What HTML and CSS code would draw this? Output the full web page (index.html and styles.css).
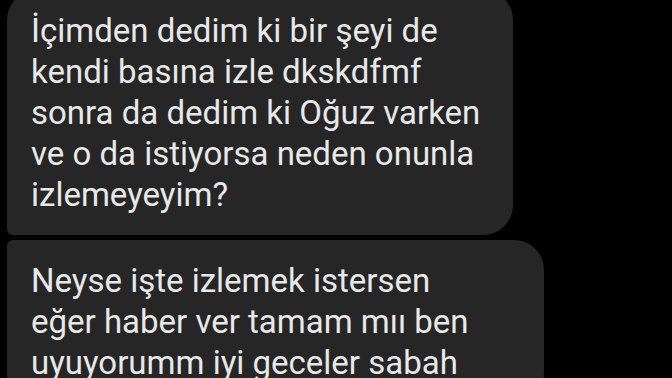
FILE: index.html
```html
<!DOCTYPE html>
<html lang="tr">
<head>
<meta charset="utf-8">
<link rel="stylesheet" href="styles.css">
</head>
<body>
<div class="thread">
  <div class="bubble bubble-first">
    <p class="msg">İçimden dedim ki bir şeyi de<br>kendi basına izle dkskdfmf<br>sonra da dedim ki Oğuz varken<br>ve o da istiyorsa neden onunla<br>izlemeyeyim?</p>
  </div>
  <div class="bubble bubble-second">
    <p class="msg">Neyse işte izlemek istersen<br>eğer haber ver tamam mıı ben<br>uyuyorumm iyi geceler sabah</p>
  </div>
</div>
</body>
</html>
```

FILE: styles.css
```css
html, body {
  margin: 0;
  padding: 0;
  background: #000;
  overflow: hidden;
}
body {
  width: 672px;
  height: 378px;
}
.thread {
  display: flex;
  flex-direction: column;
  align-items: flex-start;
  gap: 5px;
  padding-left: 7px;
}
.bubble {
  background: #262626;
  box-sizing: border-box;
  padding: 20px 20px 20px 24px;
}
.bubble-first {
  width: 506px;
  margin-top: -10px;
  border-radius: 30px 30px 30px 6px;
}
.bubble-second {
  width: 537px;
  border-radius: 6px 30px 30px 30px;
}
.msg {
  margin: 0;
  font-family: Roboto, "Noto Sans", sans-serif;
  font-size: 33px;
  line-height: 41px;
  color: #e8e8e8;
  white-space: nowrap;
}
```
